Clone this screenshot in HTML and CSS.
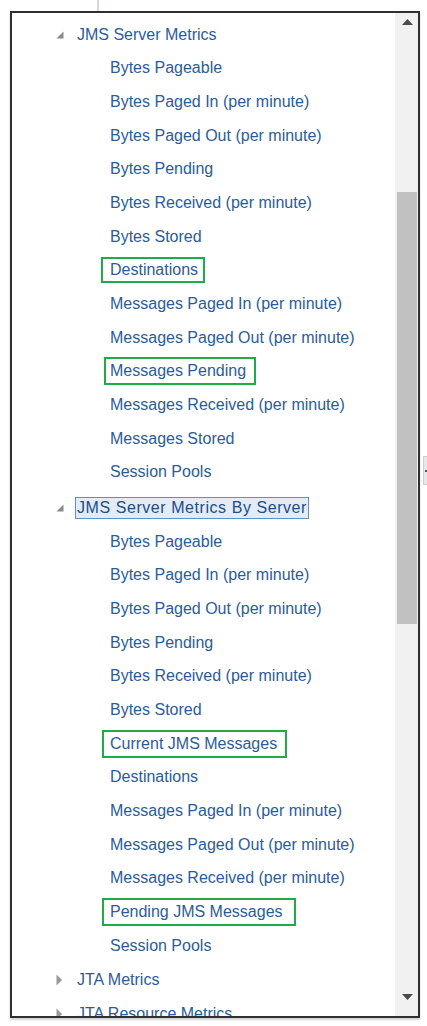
FILE: index.html
```html
<!DOCTYPE html>
<html lang="en">
<head>
<meta charset="utf-8">
<title>Metrics tree</title>
<link rel="stylesheet" href="styles.css">
</head>
<body>
<div class="topline"></div>
<div class="panel">
  <div class="tree">
    <ul class="nodes">
      <li class="node">
        <div class="row head">
          <span class="twist"><svg width="8" height="8" viewBox="0 0 8 8"><polygon points="7.5,0.5 7.5,7.5 0.5,7.5" fill="#8a8a8a"/></svg></span>
          <span class="label">JMS Server Metrics</span>
        </div>
        <ul class="children">
          <li class="row leaf">Bytes Pageable</li>
          <li class="row leaf">Bytes Paged In (per minute)</li>
          <li class="row leaf">Bytes Paged Out (per minute)</li>
          <li class="row leaf">Bytes Pending</li>
          <li class="row leaf">Bytes Received (per minute)</li>
          <li class="row leaf">Bytes Stored</li>
          <li class="row leaf"><span class="hl hl-dest">Destinations</span></li>
          <li class="row leaf">Messages Paged In (per minute)</li>
          <li class="row leaf">Messages Paged Out (per minute)</li>
          <li class="row leaf"><span class="hl hl-pend">Messages Pending</span></li>
          <li class="row leaf">Messages Received (per minute)</li>
          <li class="row leaf">Messages Stored</li>
          <li class="row leaf">Session Pools</li>
        </ul>
      </li>
      <li class="node">
        <div class="row head gap">
          <span class="twist"><svg width="8" height="8" viewBox="0 0 8 8"><polygon points="7.5,0.5 7.5,7.5 0.5,7.5" fill="#8a8a8a"/></svg></span>
          <span class="label selected">JMS Server Metrics By Server</span>
        </div>
        <ul class="children">
          <li class="row leaf">Bytes Pageable</li>
          <li class="row leaf">Bytes Paged In (per minute)</li>
          <li class="row leaf">Bytes Paged Out (per minute)</li>
          <li class="row leaf">Bytes Pending</li>
          <li class="row leaf">Bytes Received (per minute)</li>
          <li class="row leaf">Bytes Stored</li>
          <li class="row leaf"><span class="hl">Current JMS Messages</span></li>
          <li class="row leaf">Destinations</li>
          <li class="row leaf">Messages Paged In (per minute)</li>
          <li class="row leaf">Messages Paged Out (per minute)</li>
          <li class="row leaf">Messages Received (per minute)</li>
          <li class="row leaf"><span class="hl hl-wide">Pending JMS Messages</span></li>
          <li class="row leaf">Session Pools</li>
        </ul>
      </li>
      <li class="node">
        <div class="row head gap-s">
          <span class="twist"><svg width="7" height="12" viewBox="0 0 7 12"><polygon points="0.5,0.5 6,6 0.5,11.5" fill="#999999"/></svg></span>
          <span class="label">JTA Metrics</span>
        </div>
      </li>
      <li class="node">
        <div class="row head">
          <span class="twist"><svg width="7" height="12" viewBox="0 0 7 12"><polygon points="0.5,0.5 6,6 0.5,11.5" fill="#999999"/></svg></span>
          <span class="label">JTA Resource Metrics</span>
        </div>
      </li>
    </ul>
  </div>
  <div class="scroll">
    <div class="sbtn"><svg width="11" height="6" viewBox="0 0 11 6"><polygon points="0,6 5.5,0 11,6" fill="#4a4a4a"/></svg></div>
    <div class="track"><div class="thumb"></div></div>
    <div class="sbtn down"><svg width="11" height="6" viewBox="0 0 11 6"><polygon points="0,0 5.5,6 11,0" fill="#4a4a4a"/></svg></div>
  </div>
</div>
<div class="sidetab"><span class="tabdot"></span></div>
</body>
</html>
```
FILE: styles.css
```css
html, body {
  margin: 0;
  padding: 0;
  background: #ffffff;
}
body {
  font-family: "Liberation Sans", Arial, sans-serif;
  font-size: 16px;
  color: #2a5c9c;
  position: relative;
  min-height: 1026px;
}
.topline {
  width: 2px;
  height: 11px;
  margin-left: 97px;
  background: #d2d9e3;
}
.panel {
  margin-left: 10px;
  width: 410px;
  height: 1007px;
  box-sizing: border-box;
  border: 2px solid #2f2f2f;
  display: flex;
  box-shadow: 0 2px 2px rgba(0, 0, 0, 0.18);
  background: #ffffff;
}
.tree {
  flex: 1;
  overflow: hidden;
  padding-top: 5px;
}
.nodes, .children {
  list-style: none;
  margin: 0;
  padding: 0;
}
.row {
  height: 33.67px;
  display: flex;
  align-items: center;
  white-space: nowrap;
}
.head {
  padding-left: 44px;
}
.head.gap {
  margin-top: 2px;
}
.head.gap-s {
  margin-top: 1px;
}
.twist {
  width: 21px;
  flex: none;
  display: flex;
  align-items: center;
}
.twist svg {
  display: block;
}
.leaf {
  padding-left: 98px;
}
.label.selected {
  margin-left: -2px;
  padding: 1px;
  border: 1px solid #5d8fc9;
  background: #e2ebf6;
  color: #224d88;
  letter-spacing: 0.56px;
}
.hl {
  border: 2px solid #22aa47;
  padding: 3px 8px 3px 6px;
  margin-left: -8px;
}
.hl-dest {
  padding: 2px 5px 2px 7px;
  margin-left: -9px;
}
.hl-pend {
  padding: 3px 8px 3px 4px;
  margin-left: -6px;
}
.hl-wide {
  padding-right: 11px;
}
.scroll {
  width: 23px;
  flex: none;
  background: #f1f1f1;
  display: flex;
  flex-direction: column;
}
.sbtn {
  height: 17px;
  display: flex;
  align-items: center;
  justify-content: center;
  padding-left: 1px;
}
.sbtn svg {
  display: block;
}
.sbtn.down {
  height: 15px;
  align-items: flex-start;
  margin-bottom: 7px;
}
.track {
  flex: 1;
}
.thumb {
  margin-top: 162px;
  margin-left: 2px;
  width: 20px;
  height: 432px;
  background: #c1c1c1;
}
.sidetab {
  position: absolute;
  left: 423px;
  top: 456px;
  width: 6px;
  height: 29px;
  box-sizing: border-box;
  border: 1px solid #c9ccd1;
  background: #e6e8eb;
}
.tabdot {
  position: absolute;
  left: 1px;
  top: 13px;
  width: 2px;
  height: 2px;
  background: #555555;
}
```
